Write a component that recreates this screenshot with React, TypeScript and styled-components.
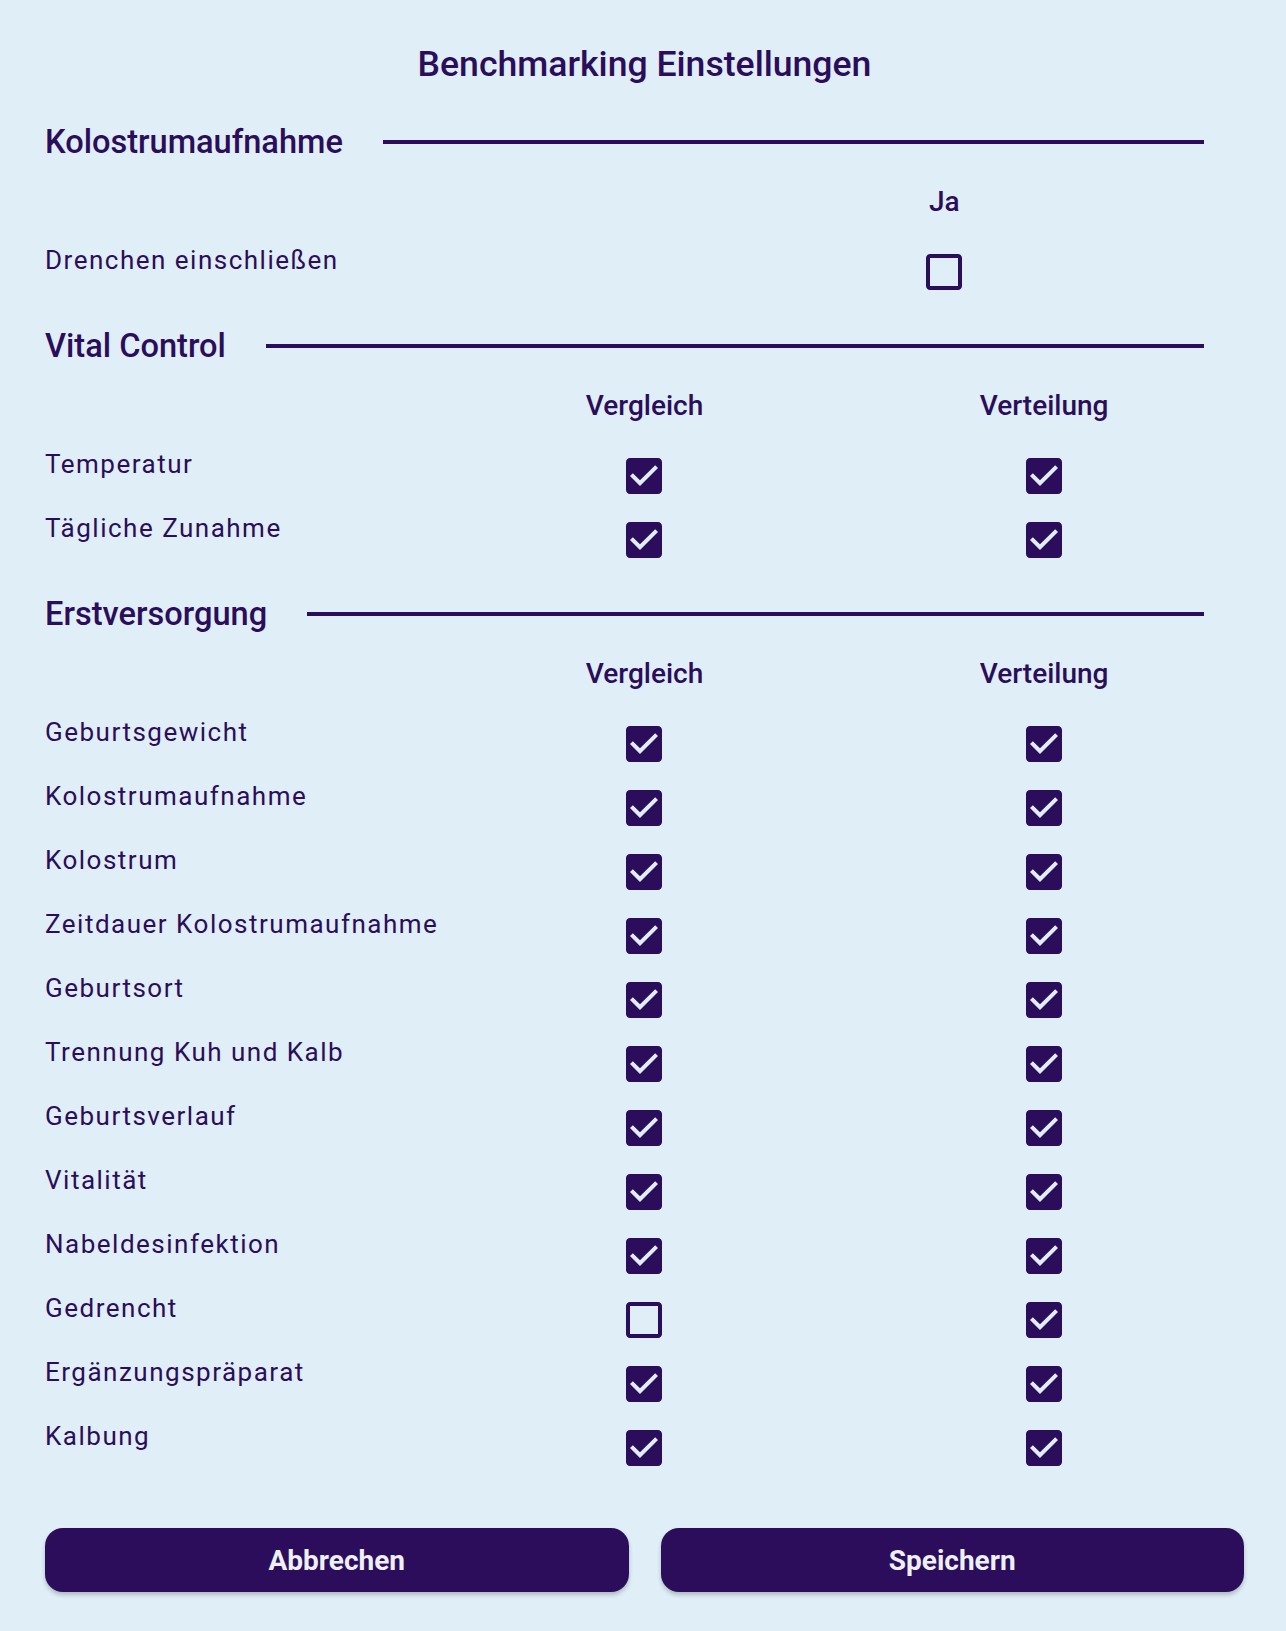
import styled, { createGlobalStyle } from 'styled-components';

const ink = '#2b0d5b';
const paper = '#e0eff7';

const GlobalStyle = createGlobalStyle`
  html, body {
    margin: 0;
    padding: 0;
    background: ${paper};
  }
  body {
    font-family: Roboto, "Noto Sans", "Liberation Sans", sans-serif;
    color: ${ink};
  }
`;

interface Section {
  title: string;
  columns: string[];
  rows: { label: string; values: boolean[] }[];
}

const sections: Section[] = [
  {
    title: 'Kolostrumaufnahme',
    columns: ['Ja'],
    rows: [{ label: 'Drenchen einschließen', values: [false] }],
  },
  {
    title: 'Vital Control',
    columns: ['Vergleich', 'Verteilung'],
    rows: [
      { label: 'Temperatur', values: [true, true] },
      { label: 'Tägliche Zunahme', values: [true, true] },
    ],
  },
  {
    title: 'Erstversorgung',
    columns: ['Vergleich', 'Verteilung'],
    rows: [
      { label: 'Geburtsgewicht', values: [true, true] },
      { label: 'Kolostrumaufnahme', values: [true, true] },
      { label: 'Kolostrum', values: [true, true] },
      { label: 'Zeitdauer Kolostrumaufnahme', values: [true, true] },
      { label: 'Geburtsort', values: [true, true] },
      { label: 'Trennung Kuh und Kalb', values: [true, true] },
      { label: 'Geburtsverlauf', values: [true, true] },
      { label: 'Vitalität', values: [true, true] },
      { label: 'Nabeldesinfektion', values: [true, true] },
      { label: 'Gedrencht', values: [false, true] },
      { label: 'Ergänzungspräparat', values: [true, true] },
      { label: 'Kalbung', values: [true, true] },
    ],
  },
];

const CheckBox = ({ checked }: { checked: boolean }) => (
  <CheckIcon viewBox="3 3 18 18" aria-checked={checked} role="checkbox">
    {checked ? (
      <path d="M19 3H5c-1.11 0-2 .9-2 2v14c0 1.1.89 2 2 2h14c1.11 0 2-.9 2-2V5c0-1.1-.89-2-2-2zm-9 14l-5-5 1.41-1.41L10 14.17l7.59-7.59L19 8l-9 9z" />
    ) : (
      <path d="M19 5v14H5V5h14m0-2H5c-1.1 0-2 .9-2 2v14c0 1.1.9 2 2 2h14c1.1 0 2-.9 2-2V5c0-1.1-.9-2-2-2z" />
    )}
  </CheckIcon>
);

const App = () => {
  return (
    <>
      <GlobalStyle />
      <Page>
        <Title>Benchmarking Einstellungen</Title>

        {sections.map((section) => (
          <SectionBlock key={section.title}>
            <SectionHeading>
              <h2>{section.title}</h2>
              <Rule />
            </SectionHeading>

            <Row $cols={section.columns.length + 1} $header>
              <span />
              {section.columns.map((c) => (
                <ColumnHead key={c}>{c}</ColumnHead>
              ))}
            </Row>

            {section.rows.map((row) => (
              <Row key={row.label} $cols={section.columns.length + 1}>
                <Label>{row.label}</Label>
                {row.values.map((v, i) => (
                  <Cell key={i}>
                    <CheckBox checked={v} />
                  </Cell>
                ))}
              </Row>
            ))}
          </SectionBlock>
        ))}

        <Footer>
          <Button type="button">Abbrechen</Button>
          <Button type="button">Speichern</Button>
        </Footer>
      </Page>
    </>
  );
};

export default App;

const Page = styled.main`
  box-sizing: border-box;
  width: 1286px;
  min-height: 1631px;
  padding: 42px 42px 40px 45px;
  background: ${paper};
`;

const Title = styled.h1`
  margin: 0 0 36px;
  font-size: 35.6px;
  line-height: 44px;
  font-weight: 500;
  text-align: center;
`;

const SectionBlock = styled.section`
  margin-bottom: 20px;
`;

const SectionHeading = styled.div`
  display: flex;
  align-items: center;
  height: 40px;
  margin-bottom: 22px;

  h2 {
    margin: 0;
    font-size: 32.6px;
    line-height: 40px;
    font-weight: 500;
    white-space: nowrap;
  }
`;

const Rule = styled.div`
  flex: 1;
  height: 4px;
  margin: 0 40px;
  background: ${ink};
`;

const Row = styled.div<{ $cols: number; $header?: boolean }>`
  display: grid;
  grid-template-columns: repeat(${(p) => p.$cols}, 1fr);
  align-items: start;
  height: ${(p) => (p.$header ? '36px' : '64px')};
  margin-bottom: ${(p) => (p.$header ? '22px' : '0')};
`;

const ColumnHead = styled.div`
  font-size: 28px;
  line-height: 36px;
  font-weight: 500;
  text-align: center;
`;

const Label = styled.div`
  font-size: 26px;
  line-height: 36px;
  font-weight: 400;
  letter-spacing: 1.5px;
  white-space: nowrap;
`;

const Cell = styled.div`
  display: flex;
  justify-content: center;
  padding-top: 12px;
`;

const CheckIcon = styled.svg`
  display: block;
  width: 36px;
  height: 36px;
  fill: ${ink};
`;

const Footer = styled.div`
  display: grid;
  grid-template-columns: 1fr 1fr;
  gap: 32px;
  margin-top: 46px;
`;

const Button = styled.button`
  height: 64px;
  border: none;
  border-radius: 18px;
  background: ${ink};
  color: #eef0f8;
  font-family: Roboto, "Liberation Sans", sans-serif;
  font-size: 28px;
  font-weight: 700;
  box-shadow: 0 3px 4px rgba(0, 0, 0, 0.22);
  cursor: pointer;
`;
